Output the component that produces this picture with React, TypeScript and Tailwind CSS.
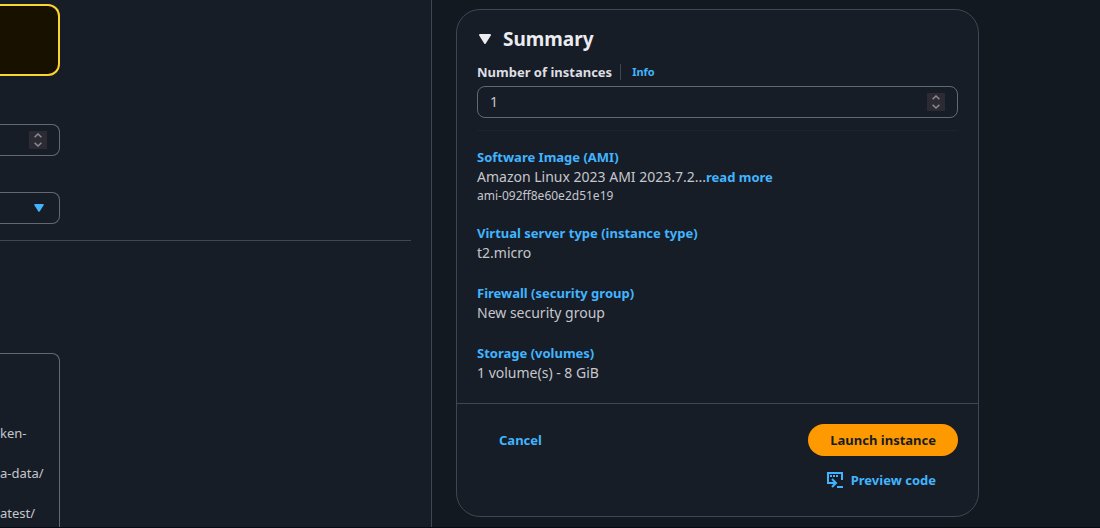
import React, { useState } from "react";

const details = [
  {
    title: "Software Image (AMI)",
    value: "Amazon Linux 2023 AMI 2023.7.2...",
    more: "read more",
    note: "ami-092ff8e60e2d51e19",
  },
  { title: "Virtual server type (instance type)", value: "t2.micro" },
  { title: "Firewall (security group)", value: "New security group" },
  { title: "Storage (volumes)", value: "1 volume(s) - 8 GiB" },
];

const Caret = ({ className }: { className: string }) => (
  <svg viewBox="0 0 12 10" className={className} fill="currentColor" aria-hidden="true">
    <path d="M1 0h10a1 1 0 0 1 .8 1.6L6.8 9.4a1 1 0 0 1-1.6 0L.2 1.6A1 1 0 0 1 1 0z" />
  </svg>
);

const PreviewIcon = () => (
  <svg viewBox="0 0 16 16" className="h-4 w-4" fill="none" stroke="currentColor" strokeWidth="2" aria-hidden="true">
    <path d="M15 8V1H1v10h8" />
    <path d="M5 7l4 4-4 4" />
    <path d="M10 15h6" />
    <path d="M3 4h2M6 4h2M9 4h2" />
  </svg>
);

type NumberFieldProps = {
  id: string;
  value: string;
  onChange: (value: string) => void;
  className: string;
};

const NumberField = ({ id, value, onChange, className }: NumberFieldProps) => {
  const step = (by: number) => onChange(String(Math.max(1, Number(value) + by)));

  return (
    <div className={`flex h-8 items-center border border-[#656871] pr-3 focus-within:border-[#42b4ff] ${className}`}>
      <input
        id={id}
        type="number"
        aria-label={id}
        value={value}
        onChange={(e) => onChange(e.target.value)}
        className="min-w-0 flex-1 appearance-none bg-transparent pl-3 text-sm text-[#c6c6cd] outline-none [-moz-appearance:textfield] [&::-webkit-inner-spin-button]:appearance-none"
      />
      <div className="flex h-[18px] w-[18px] flex-col bg-[#2c2a33] text-[#8c8c94]">
        <button type="button" aria-label="Increase" onClick={() => step(1)} className="flex h-[9px] items-center justify-center">
          <svg viewBox="0 0 8 5" className="h-[5px] w-2" fill="none" stroke="currentColor" strokeWidth="1.5">
            <path d="M.6 4.2L4 1l3.4 3.2" />
          </svg>
        </button>
        <button type="button" aria-label="Decrease" onClick={() => step(-1)} className="flex h-[9px] items-center justify-center">
          <svg viewBox="0 0 8 5" className="h-[5px] w-2" fill="none" stroke="currentColor" strokeWidth="1.5">
            <path d="M.6 .8L4 4 7.4.8" />
          </svg>
        </button>
      </div>
    </div>
  );
};

/* Right edge of the launch form */
const FormPane = () => {
  const [hops, setHops] = useState("");

  return (
    <main className="flex w-[432px] shrink-0 flex-col border-r border-[#424650] bg-[#161d26] pt-1">
      <div className="h-[72px] w-[60px] shrink-0 rounded-r-xl border-2 border-l-0 border-[#fdd32f] bg-[#191100]" />
      <NumberField id="hop-limit" value={hops} onChange={setHops} className="mt-12 w-[60px] shrink-0 rounded-r-lg border-l-0" />
      <div className="relative mt-9 h-8 w-[60px] shrink-0">
        <select
          aria-label="metadata-tags"
          className="h-full w-full appearance-none rounded-r-lg border border-l-0 border-[#656871] bg-transparent"
        />
        <Caret className="pointer-events-none absolute top-3 right-4 h-2 w-[10px] text-[#42b4ff]" />
      </div>
      <hr className="mt-4 mr-5 border-[#424650]" />
      <textarea
        aria-label="user-data"
        spellCheck={false}
        defaultValue={"\n\n\nken-\n\na-data/\n\natest/"}
        className="mt-28 w-[60px] flex-1 resize-none overflow-hidden rounded-tr-lg border border-b-0 border-l-0 border-[#656871] bg-transparent pt-[9px] text-[13px] leading-5 whitespace-pre text-[#c6c6cd] outline-none"
      />
    </main>
  );
};

const Summary = () => {
  const [count, setCount] = useState("1");

  return (
    <section className="rounded-3xl border border-[#424650] bg-[#161d26] text-sm leading-5 text-[#c6c6cd]">
      <div className="px-5 pt-[17px] pb-5">
        <button type="button" className="flex items-center gap-3 pl-[2px] text-[#ebebf0]">
          <Caret className="h-[10px] w-3" />
          <h2 className="text-[19px] leading-6 font-bold">Summary</h2>
        </button>

        <div className="mt-[11px] flex h-5 items-center">
          <label htmlFor="instances" className="text-[13px] font-bold text-[#dedee3]">
            Number of instances
          </label>
          <a href="#info" className="ml-2 border-l border-[#424650] pl-[11px] text-[11px] leading-4 font-bold text-[#42b4ff]">
            Info
          </a>
        </div>
        <NumberField id="instances" value={count} onChange={setCount} className="mt-1 rounded-lg" />

        <div className="mt-3 flex flex-col gap-5 border-t border-[#1b232d] pt-4">
          {details.map((item) => (
            <div key={item.title}>
              <a href="#details" className="block text-[13px] font-bold text-[#42b4ff]">
                {item.title}
              </a>
              <p>
                {item.value}
                {item.more && (
                  <a href="#more" className="text-[13px] font-bold text-[#42b4ff]">
                    {item.more}
                  </a>
                )}
              </p>
              {item.note && <p className="h-4 text-xs leading-[18px]">{item.note}</p>}
            </div>
          ))}
        </div>
      </div>

      <div className="flex items-start justify-between border-t border-[#424650] p-5 text-[13px] font-bold text-[#42b4ff]">
        <button type="button" className="h-8 px-[22px]">
          Cancel
        </button>
        <div className="flex flex-col items-end gap-2">
          <button type="button" className="h-8 rounded-full bg-[#ff9900] px-[22px] text-[#161d26]">
            Launch instance
          </button>
          <button type="button" className="flex h-8 items-center gap-2 px-[22px]">
            <PreviewIcon />
            Preview code
          </button>
        </div>
      </div>
    </section>
  );
};

const App = () => (
  <div className="flex h-screen flex-col overflow-hidden border-b border-[#0a0a14] bg-[#131920] font-['Noto_Sans',sans-serif]">
    <div className="flex min-h-0 flex-1">
      <FormPane />
      <aside className="min-w-0 flex-1 pt-[9px] pr-[121px] pl-6">
        <Summary />
      </aside>
    </div>
  </div>
);

export default App;
